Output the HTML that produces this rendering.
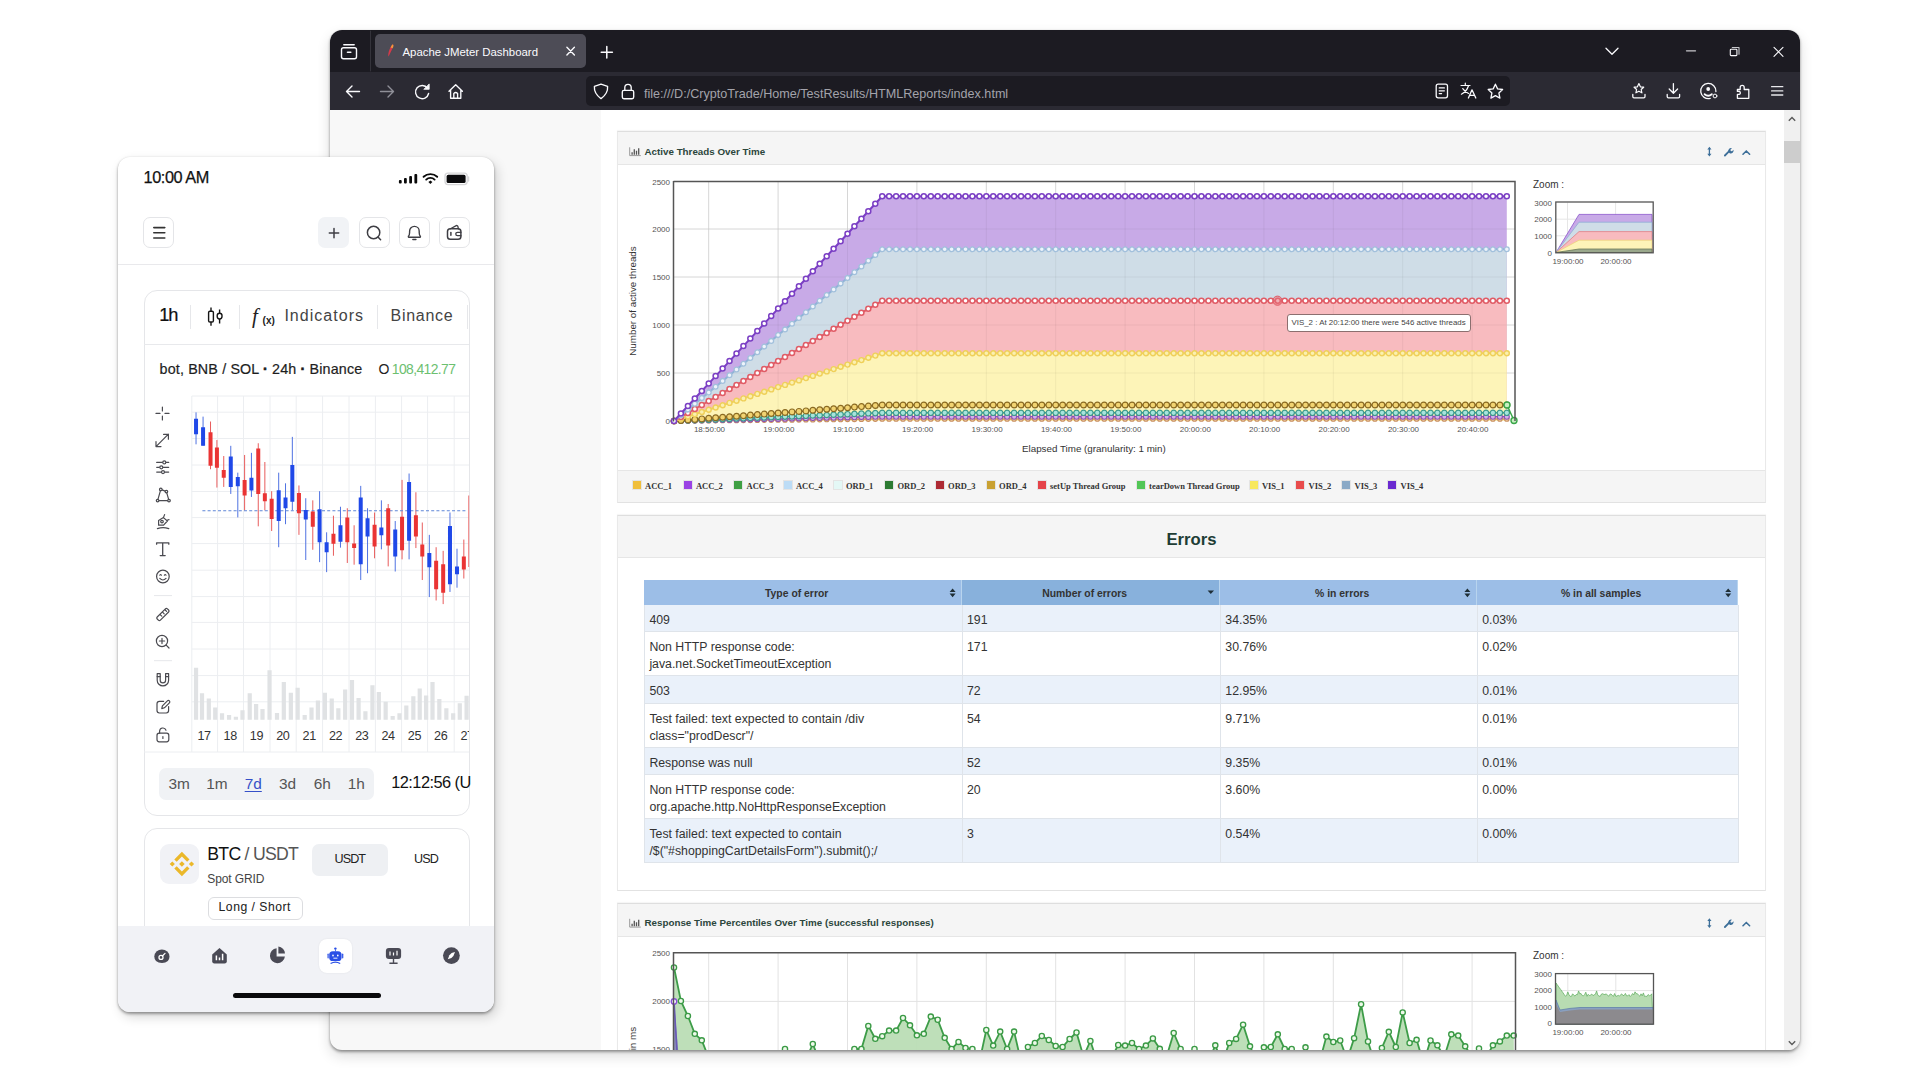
<!DOCTYPE html>
<html><head><meta charset="utf-8">
<style>
*{box-sizing:border-box;margin:0;padding:0}
html,body{width:1920px;height:1080px;overflow:hidden;background:#fff;font-family:"Liberation Sans",sans-serif}
.a{position:absolute;white-space:nowrap}
#browser{position:absolute;left:330px;top:30px;width:1470px;height:1020px;border-radius:12px;overflow:hidden;background:#f8f8f8;box-shadow:0 2px 3px rgba(0,0,0,.36),0 6px 14px rgba(0,0,0,.14),0 0 2px rgba(0,0,0,.1)}
#tabs{position:absolute;left:0;top:0;width:1470px;height:42px;background:#1c1b22}
#nav{position:absolute;left:0;top:42px;width:1470px;height:38px;background:#2b2a33}
#page{position:absolute;left:271px;top:80px;width:1183px;height:940px;background:#fff}
#sb{position:absolute;left:1454px;top:80px;width:16px;height:940px;background:#f0f0f0}
#L{position:absolute;left:0;top:0;width:1920px;height:1050px;overflow:hidden}
.card{position:absolute;background:#fff;border:1px solid #e9e9e9;border-top-color:#dedede;border-bottom-color:#e2e2e2;box-shadow:0 -1px 1px rgba(0,0,0,.035)}
.hd{position:absolute;background:#f5f5f5;border-bottom:1px solid #e6e6e6}
.ttl{position:absolute;font-size:9.8px;font-weight:700;color:#2c463c;line-height:12px}
.yl{position:absolute;font-size:8px;color:#545454;line-height:10px;text-align:right;width:30px}
.xl{position:absolute;font-size:8px;color:#545454;line-height:10px;text-align:center;width:40px}
.lg{position:absolute;font-family:"Liberation Serif",serif;font-weight:700;font-size:8.5px;color:#333;line-height:10px}
.sq{position:absolute;width:9px;height:9px}
#phone{position:absolute;left:118px;top:157px;width:376px;height:855px;border-radius:12px;background:#fff;overflow:hidden;box-shadow:0 2px 3px rgba(0,0,0,.34),3px 5px 12px rgba(0,0,0,.16),0 0 2px rgba(0,0,0,.1)}
svg{position:absolute;left:0;top:0;overflow:visible}
table{border-collapse:collapse}
</style></head><body>
<div id="browser">
  <div id="tabs"><div class="a" style="left:45px;top:4px;width:211px;height:34px;background:#4d4c56;border-radius:5px"></div></div>
  <div id="nav"><div class="a" style="left:256px;top:4px;width:924px;height:30px;background:#1c1b22;border-radius:5px"></div></div>
  <div id="page"></div>
  <div id="sb"><div class="a" style="left:0;top:31px;width:16px;height:22px;background:#cdcdcd"></div></div>
</div>
<div id="L">
<div class="card" style="left:617px;top:131px;width:1149px;height:372px"></div>
<div class="hd" style="left:618px;top:132px;width:1147px;height:33px"></div>
<div class="hd" style="left:618px;top:470px;width:1147px;height:32px;border-bottom:0;border-top:1px solid #e6e6e6"></div>
<div class="card" style="left:617px;top:515px;width:1149px;height:376px"></div>
<div class="hd" style="left:618px;top:516px;width:1147px;height:42px"></div>
<div class="card" style="left:617px;top:903px;width:1149px;height:300px"></div>
<div class="hd" style="left:618px;top:904px;width:1147px;height:33px"></div>
<svg width="1920" height="1050" viewBox="0 0 1920 1050">
<defs>
<marker id="m1" markerUnits="userSpaceOnUse" markerWidth="7.5" markerHeight="7.5" refX="3.8" refY="3.8" overflow="visible"><circle cx="3.8" cy="3.8" r="2.5" fill="#fff" stroke="#7b3fc4" stroke-width="1.5"/></marker>
<marker id="m2" markerUnits="userSpaceOnUse" markerWidth="7.1" markerHeight="7.1" refX="3.5" refY="3.5" overflow="visible"><circle cx="3.5" cy="3.5" r="2.4" fill="#eef4fb" stroke="#a2c0dc" stroke-width="1.3"/></marker>
<marker id="m3" markerUnits="userSpaceOnUse" markerWidth="7.5" markerHeight="7.5" refX="3.8" refY="3.8" overflow="visible"><circle cx="3.8" cy="3.8" r="2.5" fill="#fff" stroke="#e05c66" stroke-width="1.5"/></marker>
<marker id="m4" markerUnits="userSpaceOnUse" markerWidth="7.4" markerHeight="7.4" refX="3.7" refY="3.7" overflow="visible"><circle cx="3.7" cy="3.7" r="2.5" fill="#fbf0b0" stroke="#efd05a" stroke-width="1.4"/></marker>
<marker id="m5" markerUnits="userSpaceOnUse" markerWidth="8" markerHeight="8" refX="4" refY="4" overflow="visible"><circle cx="4" cy="4" r="2.9" fill="#f2d472" stroke="#8a6a22" stroke-width="1.2"/></marker>
<marker id="m6" markerUnits="userSpaceOnUse" markerWidth="7.6" markerHeight="7.6" refX="3.8" refY="3.8" overflow="visible"><circle cx="3.8" cy="3.8" r="2.7" fill="#a8e4dc" stroke="#3c9a8c" stroke-width="1.2"/></marker>
<marker id="m7" markerUnits="userSpaceOnUse" markerWidth="7.1" markerHeight="7.1" refX="3.5" refY="3.5" overflow="visible"><circle cx="3.5" cy="3.5" r="2.5" fill="#d4b0e8" stroke="#8c50b4" stroke-width="1.1"/></marker>
<marker id="m8" markerUnits="userSpaceOnUse" markerWidth="6.7" markerHeight="6.7" refX="3.3" refY="3.3" overflow="visible"><circle cx="3.3" cy="3.3" r="2.3" fill="#f4d0a8" stroke="#c89060" stroke-width="1.1"/></marker>
</defs>
<path d="M708.7,181V421M778.1,181V421M847.5,181V421M916.9,181V421M986.3,181V421M1055.7,181V421M1125.1,181V421M1194.5,181V421M1263.9,181V421M1333.3,181V421M1402.7,181V421M1472.1,181V421M674,373H1515M674,325H1515M674,277H1515M674,229H1515" stroke="#e2e2e2" stroke-width="1" fill="none"/>
<path d="M674,421L674,421 680.9,413.5 687.9,406 694.8,398.5 701.8,391 708.7,383.6 715.6,376.1 722.6,368.6 729.5,361.1 736.5,353.6 743.4,346.1 750.3,338.6 757.3,331.1 764.2,323.6 771.2,316.1 778.1,308.6 785,301.2 792,293.7 798.9,286.2 805.9,278.7 812.8,271.2 819.7,263.7 826.7,256.2 833.6,248.7 840.6,241.2 847.5,233.8 854.4,226.3 861.4,218.8 868.3,211.3 875.3,203.8 882.2,196.3 889.1,196.3 896.1,196.3 903,196.3 910,196.3 916.9,196.3 923.8,196.3 930.8,196.3 937.7,196.3 944.7,196.3 951.6,196.3 958.5,196.3 965.5,196.3 972.4,196.3 979.4,196.3 986.3,196.3 993.2,196.3 1000.2,196.3 1007.1,196.3 1014.1,196.3 1021,196.3 1027.9,196.3 1034.9,196.3 1041.8,196.3 1048.8,196.3 1055.7,196.3 1062.6,196.3 1069.6,196.3 1076.5,196.3 1083.5,196.3 1090.4,196.3 1097.3,196.3 1104.3,196.3 1111.2,196.3 1118.2,196.3 1125.1,196.3 1132,196.3 1139,196.3 1145.9,196.3 1152.9,196.3 1159.8,196.3 1166.7,196.3 1173.7,196.3 1180.6,196.3 1187.6,196.3 1194.5,196.3 1201.4,196.3 1208.4,196.3 1215.3,196.3 1222.3,196.3 1229.2,196.3 1236.1,196.3 1243.1,196.3 1250,196.3 1257,196.3 1263.9,196.3 1270.8,196.3 1277.8,196.3 1284.7,196.3 1291.7,196.3 1298.6,196.3 1305.5,196.3 1312.5,196.3 1319.4,196.3 1326.4,196.3 1333.3,196.3 1340.2,196.3 1347.2,196.3 1354.1,196.3 1361.1,196.3 1368,196.3 1374.9,196.3 1381.9,196.3 1388.8,196.3 1395.8,196.3 1402.7,196.3 1409.6,196.3 1416.6,196.3 1423.5,196.3 1430.5,196.3 1437.4,196.3 1444.3,196.3 1451.3,196.3 1458.2,196.3 1465.2,196.3 1472.1,196.3 1479,196.3 1486,196.3 1492.9,196.3 1499.9,196.3 1506.8,196.3 L1506.8,421Z" fill="#c8aae7"/>
<path d="M674,421L674,421 680.9,415.3 687.9,409.6 694.8,403.8 701.8,398.1 708.7,392.4 715.6,386.7 722.6,380.9 729.5,375.2 736.5,369.5 743.4,363.8 750.3,358 757.3,352.3 764.2,346.6 771.2,340.9 778.1,335.1 785,329.4 792,323.7 798.9,318 805.9,312.3 812.8,306.5 819.7,300.8 826.7,295.1 833.6,289.4 840.6,283.6 847.5,277.9 854.4,272.2 861.4,266.5 868.3,260.7 875.3,255 882.2,249.3 889.1,249.3 896.1,249.3 903,249.3 910,249.3 916.9,249.3 923.8,249.3 930.8,249.3 937.7,249.3 944.7,249.3 951.6,249.3 958.5,249.3 965.5,249.3 972.4,249.3 979.4,249.3 986.3,249.3 993.2,249.3 1000.2,249.3 1007.1,249.3 1014.1,249.3 1021,249.3 1027.9,249.3 1034.9,249.3 1041.8,249.3 1048.8,249.3 1055.7,249.3 1062.6,249.3 1069.6,249.3 1076.5,249.3 1083.5,249.3 1090.4,249.3 1097.3,249.3 1104.3,249.3 1111.2,249.3 1118.2,249.3 1125.1,249.3 1132,249.3 1139,249.3 1145.9,249.3 1152.9,249.3 1159.8,249.3 1166.7,249.3 1173.7,249.3 1180.6,249.3 1187.6,249.3 1194.5,249.3 1201.4,249.3 1208.4,249.3 1215.3,249.3 1222.3,249.3 1229.2,249.3 1236.1,249.3 1243.1,249.3 1250,249.3 1257,249.3 1263.9,249.3 1270.8,249.3 1277.8,249.3 1284.7,249.3 1291.7,249.3 1298.6,249.3 1305.5,249.3 1312.5,249.3 1319.4,249.3 1326.4,249.3 1333.3,249.3 1340.2,249.3 1347.2,249.3 1354.1,249.3 1361.1,249.3 1368,249.3 1374.9,249.3 1381.9,249.3 1388.8,249.3 1395.8,249.3 1402.7,249.3 1409.6,249.3 1416.6,249.3 1423.5,249.3 1430.5,249.3 1437.4,249.3 1444.3,249.3 1451.3,249.3 1458.2,249.3 1465.2,249.3 1472.1,249.3 1479,249.3 1486,249.3 1492.9,249.3 1499.9,249.3 1506.8,249.3 L1506.8,421Z" fill="#cfdde7"/>
<path d="M674,421L674,421 680.9,417 687.9,413 694.8,409 701.8,405 708.7,401 715.6,397 722.6,393 729.5,388.9 736.5,384.9 743.4,380.9 750.3,376.9 757.3,372.9 764.2,368.9 771.2,364.9 778.1,360.9 785,356.9 792,352.9 798.9,348.9 805.9,344.9 812.8,340.9 819.7,336.9 826.7,332.9 833.6,328.8 840.6,324.8 847.5,320.8 854.4,316.8 861.4,312.8 868.3,308.8 875.3,304.8 882.2,300.8 889.1,300.8 896.1,300.8 903,300.8 910,300.8 916.9,300.8 923.8,300.8 930.8,300.8 937.7,300.8 944.7,300.8 951.6,300.8 958.5,300.8 965.5,300.8 972.4,300.8 979.4,300.8 986.3,300.8 993.2,300.8 1000.2,300.8 1007.1,300.8 1014.1,300.8 1021,300.8 1027.9,300.8 1034.9,300.8 1041.8,300.8 1048.8,300.8 1055.7,300.8 1062.6,300.8 1069.6,300.8 1076.5,300.8 1083.5,300.8 1090.4,300.8 1097.3,300.8 1104.3,300.8 1111.2,300.8 1118.2,300.8 1125.1,300.8 1132,300.8 1139,300.8 1145.9,300.8 1152.9,300.8 1159.8,300.8 1166.7,300.8 1173.7,300.8 1180.6,300.8 1187.6,300.8 1194.5,300.8 1201.4,300.8 1208.4,300.8 1215.3,300.8 1222.3,300.8 1229.2,300.8 1236.1,300.8 1243.1,300.8 1250,300.8 1257,300.8 1263.9,300.8 1270.8,300.8 1277.8,300.8 1284.7,300.8 1291.7,300.8 1298.6,300.8 1305.5,300.8 1312.5,300.8 1319.4,300.8 1326.4,300.8 1333.3,300.8 1340.2,300.8 1347.2,300.8 1354.1,300.8 1361.1,300.8 1368,300.8 1374.9,300.8 1381.9,300.8 1388.8,300.8 1395.8,300.8 1402.7,300.8 1409.6,300.8 1416.6,300.8 1423.5,300.8 1430.5,300.8 1437.4,300.8 1444.3,300.8 1451.3,300.8 1458.2,300.8 1465.2,300.8 1472.1,300.8 1479,300.8 1486,300.8 1492.9,300.8 1499.9,300.8 1506.8,300.8 L1506.8,421Z" fill="#f8bbbf"/>
<path d="M674,421L674,421 680.9,418.7 687.9,416.5 694.8,414.2 701.8,412 708.7,409.7 715.6,407.5 722.6,405.2 729.5,402.9 736.5,400.7 743.4,398.4 750.3,396.2 757.3,393.9 764.2,391.7 771.2,389.4 778.1,387.1 785,384.9 792,382.6 798.9,380.4 805.9,378.1 812.8,375.9 819.7,373.6 826.7,371.4 833.6,369.1 840.6,366.8 847.5,364.6 854.4,362.3 861.4,360.1 868.3,357.8 875.3,355.6 882.2,353.3 889.1,353.3 896.1,353.3 903,353.3 910,353.3 916.9,353.3 923.8,353.3 930.8,353.3 937.7,353.3 944.7,353.3 951.6,353.3 958.5,353.3 965.5,353.3 972.4,353.3 979.4,353.3 986.3,353.3 993.2,353.3 1000.2,353.3 1007.1,353.3 1014.1,353.3 1021,353.3 1027.9,353.3 1034.9,353.3 1041.8,353.3 1048.8,353.3 1055.7,353.3 1062.6,353.3 1069.6,353.3 1076.5,353.3 1083.5,353.3 1090.4,353.3 1097.3,353.3 1104.3,353.3 1111.2,353.3 1118.2,353.3 1125.1,353.3 1132,353.3 1139,353.3 1145.9,353.3 1152.9,353.3 1159.8,353.3 1166.7,353.3 1173.7,353.3 1180.6,353.3 1187.6,353.3 1194.5,353.3 1201.4,353.3 1208.4,353.3 1215.3,353.3 1222.3,353.3 1229.2,353.3 1236.1,353.3 1243.1,353.3 1250,353.3 1257,353.3 1263.9,353.3 1270.8,353.3 1277.8,353.3 1284.7,353.3 1291.7,353.3 1298.6,353.3 1305.5,353.3 1312.5,353.3 1319.4,353.3 1326.4,353.3 1333.3,353.3 1340.2,353.3 1347.2,353.3 1354.1,353.3 1361.1,353.3 1368,353.3 1374.9,353.3 1381.9,353.3 1388.8,353.3 1395.8,353.3 1402.7,353.3 1409.6,353.3 1416.6,353.3 1423.5,353.3 1430.5,353.3 1437.4,353.3 1444.3,353.3 1451.3,353.3 1458.2,353.3 1465.2,353.3 1472.1,353.3 1479,353.3 1486,353.3 1492.9,353.3 1499.9,353.3 1506.8,353.3 L1506.8,421Z" fill="#fdf4b8"/>
<path d="M708.7,181V421M778.1,181V421M847.5,181V421M916.9,181V421M986.3,181V421M1055.7,181V421M1125.1,181V421M1194.5,181V421M1263.9,181V421M1333.3,181V421M1402.7,181V421M1472.1,181V421M674,373H1515M674,325H1515M674,277H1515M674,229H1515" stroke="#000" stroke-opacity="0.05" stroke-width="1" fill="none"/>
<polyline points="674,421 680.9,420.9 687.9,420.9 694.8,420.8 701.8,420.7 708.7,420.7 715.6,420.6 722.6,420.5 729.5,420.5 736.5,420.4 743.4,420.3 750.3,420.3 757.3,420.2 764.2,420.1 771.2,420.1 778.1,420 785,419.9 792,419.9 798.9,419.8 805.9,419.7 812.8,419.7 819.7,419.6 826.7,419.5 833.6,419.5 840.6,419.4 847.5,419.3 854.4,419.3 861.4,419.2 868.3,419.1 875.3,419.1 882.2,419 889.1,419 896.1,419 903,419 910,419 916.9,419 923.8,419 930.8,419 937.7,419 944.7,419 951.6,419 958.5,419 965.5,419 972.4,419 979.4,419 986.3,419 993.2,419 1000.2,419 1007.1,419 1014.1,419 1021,419 1027.9,419 1034.9,419 1041.8,419 1048.8,419 1055.7,419 1062.6,419 1069.6,419 1076.5,419 1083.5,419 1090.4,419 1097.3,419 1104.3,419 1111.2,419 1118.2,419 1125.1,419 1132,419 1139,419 1145.9,419 1152.9,419 1159.8,419 1166.7,419 1173.7,419 1180.6,419 1187.6,419 1194.5,419 1201.4,419 1208.4,419 1215.3,419 1222.3,419 1229.2,419 1236.1,419 1243.1,419 1250,419 1257,419 1263.9,419 1270.8,419 1277.8,419 1284.7,419 1291.7,419 1298.6,419 1305.5,419 1312.5,419 1319.4,419 1326.4,419 1333.3,419 1340.2,419 1347.2,419 1354.1,419 1361.1,419 1368,419 1374.9,419 1381.9,419 1388.8,419 1395.8,419 1402.7,419 1409.6,419 1416.6,419 1423.5,419 1430.5,419 1437.4,419 1444.3,419 1451.3,419 1458.2,419 1465.2,419 1472.1,419 1479,419 1486,419 1492.9,419 1499.9,419 1506.8,419" fill="none" stroke="#c89060" stroke-width="1.5" marker-start="url(#m8)" marker-mid="url(#m8)" marker-end="url(#m8)"/>
<polyline points="674,421 680.9,420.9 687.9,420.7 694.8,420.6 701.8,420.4 708.7,420.3 715.6,420.1 722.6,420 729.5,419.9 736.5,419.7 743.4,419.6 750.3,419.4 757.3,419.3 764.2,419.1 771.2,419 778.1,418.9 785,418.7 792,418.6 798.9,418.4 805.9,418.3 812.8,418.1 819.7,418 826.7,417.8 833.6,417.7 840.6,417.6 847.5,417.4 854.4,417.3 861.4,417.1 868.3,417 875.3,416.8 882.2,416.7 889.1,416.7 896.1,416.7 903,416.7 910,416.7 916.9,416.7 923.8,416.7 930.8,416.7 937.7,416.7 944.7,416.7 951.6,416.7 958.5,416.7 965.5,416.7 972.4,416.7 979.4,416.7 986.3,416.7 993.2,416.7 1000.2,416.7 1007.1,416.7 1014.1,416.7 1021,416.7 1027.9,416.7 1034.9,416.7 1041.8,416.7 1048.8,416.7 1055.7,416.7 1062.6,416.7 1069.6,416.7 1076.5,416.7 1083.5,416.7 1090.4,416.7 1097.3,416.7 1104.3,416.7 1111.2,416.7 1118.2,416.7 1125.1,416.7 1132,416.7 1139,416.7 1145.9,416.7 1152.9,416.7 1159.8,416.7 1166.7,416.7 1173.7,416.7 1180.6,416.7 1187.6,416.7 1194.5,416.7 1201.4,416.7 1208.4,416.7 1215.3,416.7 1222.3,416.7 1229.2,416.7 1236.1,416.7 1243.1,416.7 1250,416.7 1257,416.7 1263.9,416.7 1270.8,416.7 1277.8,416.7 1284.7,416.7 1291.7,416.7 1298.6,416.7 1305.5,416.7 1312.5,416.7 1319.4,416.7 1326.4,416.7 1333.3,416.7 1340.2,416.7 1347.2,416.7 1354.1,416.7 1361.1,416.7 1368,416.7 1374.9,416.7 1381.9,416.7 1388.8,416.7 1395.8,416.7 1402.7,416.7 1409.6,416.7 1416.6,416.7 1423.5,416.7 1430.5,416.7 1437.4,416.7 1444.3,416.7 1451.3,416.7 1458.2,416.7 1465.2,416.7 1472.1,416.7 1479,416.7 1486,416.7 1492.9,416.7 1499.9,416.7 1506.8,416.7" fill="none" stroke="#8c50b4" stroke-width="1.5" marker-start="url(#m7)" marker-mid="url(#m7)" marker-end="url(#m7)"/>
<polyline points="674,421 680.9,420.7 687.9,420.5 694.8,420.2 701.8,419.9 708.7,419.6 715.6,419.4 722.6,419.1 729.5,418.8 736.5,418.5 743.4,418.3 750.3,418 757.3,417.7 764.2,417.4 771.2,417.2 778.1,416.9 785,416.6 792,416.4 798.9,416.1 805.9,415.8 812.8,415.5 819.7,415.3 826.7,415 833.6,414.7 840.6,414.4 847.5,414.2 854.4,413.9 861.4,413.6 868.3,413.3 875.3,413.1 882.2,412.8 889.1,412.8 896.1,412.8 903,412.8 910,412.8 916.9,412.8 923.8,412.8 930.8,412.8 937.7,412.8 944.7,412.8 951.6,412.8 958.5,412.8 965.5,412.8 972.4,412.8 979.4,412.8 986.3,412.8 993.2,412.8 1000.2,412.8 1007.1,412.8 1014.1,412.8 1021,412.8 1027.9,412.8 1034.9,412.8 1041.8,412.8 1048.8,412.8 1055.7,412.8 1062.6,412.8 1069.6,412.8 1076.5,412.8 1083.5,412.8 1090.4,412.8 1097.3,412.8 1104.3,412.8 1111.2,412.8 1118.2,412.8 1125.1,412.8 1132,412.8 1139,412.8 1145.9,412.8 1152.9,412.8 1159.8,412.8 1166.7,412.8 1173.7,412.8 1180.6,412.8 1187.6,412.8 1194.5,412.8 1201.4,412.8 1208.4,412.8 1215.3,412.8 1222.3,412.8 1229.2,412.8 1236.1,412.8 1243.1,412.8 1250,412.8 1257,412.8 1263.9,412.8 1270.8,412.8 1277.8,412.8 1284.7,412.8 1291.7,412.8 1298.6,412.8 1305.5,412.8 1312.5,412.8 1319.4,412.8 1326.4,412.8 1333.3,412.8 1340.2,412.8 1347.2,412.8 1354.1,412.8 1361.1,412.8 1368,412.8 1374.9,412.8 1381.9,412.8 1388.8,412.8 1395.8,412.8 1402.7,412.8 1409.6,412.8 1416.6,412.8 1423.5,412.8 1430.5,412.8 1437.4,412.8 1444.3,412.8 1451.3,412.8 1458.2,412.8 1465.2,412.8 1472.1,412.8 1479,412.8 1486,412.8 1492.9,412.8 1499.9,412.8 1506.8,412.8" fill="none" stroke="#3c9a8c" stroke-width="1.5" marker-start="url(#m6)" marker-mid="url(#m6)" marker-end="url(#m6)"/>
<polyline points="674,421 680.9,420.5 687.9,419.9 694.8,419.4 701.8,418.9 708.7,418.3 715.6,417.8 722.6,417.3 729.5,416.7 736.5,416.2 743.4,415.7 750.3,415.1 757.3,414.6 764.2,414.1 771.2,413.5 778.1,413 785,412.5 792,411.9 798.9,411.4 805.9,410.9 812.8,410.3 819.7,409.8 826.7,409.3 833.6,408.7 840.6,408.2 847.5,407.7 854.4,407.1 861.4,406.6 868.3,406.1 875.3,405.5 882.2,405 889.1,405 896.1,405 903,405 910,405 916.9,405 923.8,405 930.8,405 937.7,405 944.7,405 951.6,405 958.5,405 965.5,405 972.4,405 979.4,405 986.3,405 993.2,405 1000.2,405 1007.1,405 1014.1,405 1021,405 1027.9,405 1034.9,405 1041.8,405 1048.8,405 1055.7,405 1062.6,405 1069.6,405 1076.5,405 1083.5,405 1090.4,405 1097.3,405 1104.3,405 1111.2,405 1118.2,405 1125.1,405 1132,405 1139,405 1145.9,405 1152.9,405 1159.8,405 1166.7,405 1173.7,405 1180.6,405 1187.6,405 1194.5,405 1201.4,405 1208.4,405 1215.3,405 1222.3,405 1229.2,405 1236.1,405 1243.1,405 1250,405 1257,405 1263.9,405 1270.8,405 1277.8,405 1284.7,405 1291.7,405 1298.6,405 1305.5,405 1312.5,405 1319.4,405 1326.4,405 1333.3,405 1340.2,405 1347.2,405 1354.1,405 1361.1,405 1368,405 1374.9,405 1381.9,405 1388.8,405 1395.8,405 1402.7,405 1409.6,405 1416.6,405 1423.5,405 1430.5,405 1437.4,405 1444.3,405 1451.3,405 1458.2,405 1465.2,405 1472.1,405 1479,405 1486,405 1492.9,405 1499.9,405 1506.8,405" fill="none" stroke="#7a5a18" stroke-width="1.5" marker-start="url(#m5)" marker-mid="url(#m5)" marker-end="url(#m5)"/>
<polyline points="674,421 680.9,418.7 687.9,416.5 694.8,414.2 701.8,412 708.7,409.7 715.6,407.5 722.6,405.2 729.5,402.9 736.5,400.7 743.4,398.4 750.3,396.2 757.3,393.9 764.2,391.7 771.2,389.4 778.1,387.1 785,384.9 792,382.6 798.9,380.4 805.9,378.1 812.8,375.9 819.7,373.6 826.7,371.4 833.6,369.1 840.6,366.8 847.5,364.6 854.4,362.3 861.4,360.1 868.3,357.8 875.3,355.6 882.2,353.3 889.1,353.3 896.1,353.3 903,353.3 910,353.3 916.9,353.3 923.8,353.3 930.8,353.3 937.7,353.3 944.7,353.3 951.6,353.3 958.5,353.3 965.5,353.3 972.4,353.3 979.4,353.3 986.3,353.3 993.2,353.3 1000.2,353.3 1007.1,353.3 1014.1,353.3 1021,353.3 1027.9,353.3 1034.9,353.3 1041.8,353.3 1048.8,353.3 1055.7,353.3 1062.6,353.3 1069.6,353.3 1076.5,353.3 1083.5,353.3 1090.4,353.3 1097.3,353.3 1104.3,353.3 1111.2,353.3 1118.2,353.3 1125.1,353.3 1132,353.3 1139,353.3 1145.9,353.3 1152.9,353.3 1159.8,353.3 1166.7,353.3 1173.7,353.3 1180.6,353.3 1187.6,353.3 1194.5,353.3 1201.4,353.3 1208.4,353.3 1215.3,353.3 1222.3,353.3 1229.2,353.3 1236.1,353.3 1243.1,353.3 1250,353.3 1257,353.3 1263.9,353.3 1270.8,353.3 1277.8,353.3 1284.7,353.3 1291.7,353.3 1298.6,353.3 1305.5,353.3 1312.5,353.3 1319.4,353.3 1326.4,353.3 1333.3,353.3 1340.2,353.3 1347.2,353.3 1354.1,353.3 1361.1,353.3 1368,353.3 1374.9,353.3 1381.9,353.3 1388.8,353.3 1395.8,353.3 1402.7,353.3 1409.6,353.3 1416.6,353.3 1423.5,353.3 1430.5,353.3 1437.4,353.3 1444.3,353.3 1451.3,353.3 1458.2,353.3 1465.2,353.3 1472.1,353.3 1479,353.3 1486,353.3 1492.9,353.3 1499.9,353.3 1506.8,353.3" fill="none" stroke="#efd15c" stroke-width="2" marker-start="url(#m4)" marker-mid="url(#m4)" marker-end="url(#m4)"/>
<polyline points="674,421 680.9,417 687.9,413 694.8,409 701.8,405 708.7,401 715.6,397 722.6,393 729.5,388.9 736.5,384.9 743.4,380.9 750.3,376.9 757.3,372.9 764.2,368.9 771.2,364.9 778.1,360.9 785,356.9 792,352.9 798.9,348.9 805.9,344.9 812.8,340.9 819.7,336.9 826.7,332.9 833.6,328.8 840.6,324.8 847.5,320.8 854.4,316.8 861.4,312.8 868.3,308.8 875.3,304.8 882.2,300.8 889.1,300.8 896.1,300.8 903,300.8 910,300.8 916.9,300.8 923.8,300.8 930.8,300.8 937.7,300.8 944.7,300.8 951.6,300.8 958.5,300.8 965.5,300.8 972.4,300.8 979.4,300.8 986.3,300.8 993.2,300.8 1000.2,300.8 1007.1,300.8 1014.1,300.8 1021,300.8 1027.9,300.8 1034.9,300.8 1041.8,300.8 1048.8,300.8 1055.7,300.8 1062.6,300.8 1069.6,300.8 1076.5,300.8 1083.5,300.8 1090.4,300.8 1097.3,300.8 1104.3,300.8 1111.2,300.8 1118.2,300.8 1125.1,300.8 1132,300.8 1139,300.8 1145.9,300.8 1152.9,300.8 1159.8,300.8 1166.7,300.8 1173.7,300.8 1180.6,300.8 1187.6,300.8 1194.5,300.8 1201.4,300.8 1208.4,300.8 1215.3,300.8 1222.3,300.8 1229.2,300.8 1236.1,300.8 1243.1,300.8 1250,300.8 1257,300.8 1263.9,300.8 1270.8,300.8 1277.8,300.8 1284.7,300.8 1291.7,300.8 1298.6,300.8 1305.5,300.8 1312.5,300.8 1319.4,300.8 1326.4,300.8 1333.3,300.8 1340.2,300.8 1347.2,300.8 1354.1,300.8 1361.1,300.8 1368,300.8 1374.9,300.8 1381.9,300.8 1388.8,300.8 1395.8,300.8 1402.7,300.8 1409.6,300.8 1416.6,300.8 1423.5,300.8 1430.5,300.8 1437.4,300.8 1444.3,300.8 1451.3,300.8 1458.2,300.8 1465.2,300.8 1472.1,300.8 1479,300.8 1486,300.8 1492.9,300.8 1499.9,300.8 1506.8,300.8" fill="none" stroke="#e05c66" stroke-width="2" marker-start="url(#m3)" marker-mid="url(#m3)" marker-end="url(#m3)"/>
<polyline points="674,421 680.9,415.3 687.9,409.6 694.8,403.8 701.8,398.1 708.7,392.4 715.6,386.7 722.6,380.9 729.5,375.2 736.5,369.5 743.4,363.8 750.3,358 757.3,352.3 764.2,346.6 771.2,340.9 778.1,335.1 785,329.4 792,323.7 798.9,318 805.9,312.3 812.8,306.5 819.7,300.8 826.7,295.1 833.6,289.4 840.6,283.6 847.5,277.9 854.4,272.2 861.4,266.5 868.3,260.7 875.3,255 882.2,249.3 889.1,249.3 896.1,249.3 903,249.3 910,249.3 916.9,249.3 923.8,249.3 930.8,249.3 937.7,249.3 944.7,249.3 951.6,249.3 958.5,249.3 965.5,249.3 972.4,249.3 979.4,249.3 986.3,249.3 993.2,249.3 1000.2,249.3 1007.1,249.3 1014.1,249.3 1021,249.3 1027.9,249.3 1034.9,249.3 1041.8,249.3 1048.8,249.3 1055.7,249.3 1062.6,249.3 1069.6,249.3 1076.5,249.3 1083.5,249.3 1090.4,249.3 1097.3,249.3 1104.3,249.3 1111.2,249.3 1118.2,249.3 1125.1,249.3 1132,249.3 1139,249.3 1145.9,249.3 1152.9,249.3 1159.8,249.3 1166.7,249.3 1173.7,249.3 1180.6,249.3 1187.6,249.3 1194.5,249.3 1201.4,249.3 1208.4,249.3 1215.3,249.3 1222.3,249.3 1229.2,249.3 1236.1,249.3 1243.1,249.3 1250,249.3 1257,249.3 1263.9,249.3 1270.8,249.3 1277.8,249.3 1284.7,249.3 1291.7,249.3 1298.6,249.3 1305.5,249.3 1312.5,249.3 1319.4,249.3 1326.4,249.3 1333.3,249.3 1340.2,249.3 1347.2,249.3 1354.1,249.3 1361.1,249.3 1368,249.3 1374.9,249.3 1381.9,249.3 1388.8,249.3 1395.8,249.3 1402.7,249.3 1409.6,249.3 1416.6,249.3 1423.5,249.3 1430.5,249.3 1437.4,249.3 1444.3,249.3 1451.3,249.3 1458.2,249.3 1465.2,249.3 1472.1,249.3 1479,249.3 1486,249.3 1492.9,249.3 1499.9,249.3 1506.8,249.3" fill="none" stroke="#91b3d8" stroke-width="2" marker-start="url(#m2)" marker-mid="url(#m2)" marker-end="url(#m2)"/>
<polyline points="674,421 680.9,413.5 687.9,406 694.8,398.5 701.8,391 708.7,383.6 715.6,376.1 722.6,368.6 729.5,361.1 736.5,353.6 743.4,346.1 750.3,338.6 757.3,331.1 764.2,323.6 771.2,316.1 778.1,308.6 785,301.2 792,293.7 798.9,286.2 805.9,278.7 812.8,271.2 819.7,263.7 826.7,256.2 833.6,248.7 840.6,241.2 847.5,233.8 854.4,226.3 861.4,218.8 868.3,211.3 875.3,203.8 882.2,196.3 889.1,196.3 896.1,196.3 903,196.3 910,196.3 916.9,196.3 923.8,196.3 930.8,196.3 937.7,196.3 944.7,196.3 951.6,196.3 958.5,196.3 965.5,196.3 972.4,196.3 979.4,196.3 986.3,196.3 993.2,196.3 1000.2,196.3 1007.1,196.3 1014.1,196.3 1021,196.3 1027.9,196.3 1034.9,196.3 1041.8,196.3 1048.8,196.3 1055.7,196.3 1062.6,196.3 1069.6,196.3 1076.5,196.3 1083.5,196.3 1090.4,196.3 1097.3,196.3 1104.3,196.3 1111.2,196.3 1118.2,196.3 1125.1,196.3 1132,196.3 1139,196.3 1145.9,196.3 1152.9,196.3 1159.8,196.3 1166.7,196.3 1173.7,196.3 1180.6,196.3 1187.6,196.3 1194.5,196.3 1201.4,196.3 1208.4,196.3 1215.3,196.3 1222.3,196.3 1229.2,196.3 1236.1,196.3 1243.1,196.3 1250,196.3 1257,196.3 1263.9,196.3 1270.8,196.3 1277.8,196.3 1284.7,196.3 1291.7,196.3 1298.6,196.3 1305.5,196.3 1312.5,196.3 1319.4,196.3 1326.4,196.3 1333.3,196.3 1340.2,196.3 1347.2,196.3 1354.1,196.3 1361.1,196.3 1368,196.3 1374.9,196.3 1381.9,196.3 1388.8,196.3 1395.8,196.3 1402.7,196.3 1409.6,196.3 1416.6,196.3 1423.5,196.3 1430.5,196.3 1437.4,196.3 1444.3,196.3 1451.3,196.3 1458.2,196.3 1465.2,196.3 1472.1,196.3 1479,196.3 1486,196.3 1492.9,196.3 1499.9,196.3 1506.8,196.3" fill="none" stroke="#7b3fc4" stroke-width="2" marker-start="url(#m1)" marker-mid="url(#m1)" marker-end="url(#m1)"/>
<circle cx="1277.5" cy="300.7" r="4.6" fill="#e8707a" fill-opacity="0.55" stroke="#e05c66" stroke-width="1"/>
<path d="M1507,405L1514,420.5" stroke="#3aa64a" stroke-width="1.5"/><circle cx="1507" cy="405" r="3" fill="#c8f0c0" stroke="#3aa64a" stroke-width="1.4"/><circle cx="1514" cy="420.5" r="3" fill="#c8f0c0" stroke="#3aa64a" stroke-width="1.4"/>
<path d="M673.5,181.5H1515V421" fill="none" stroke="#555" stroke-width="1.5"/><path d="M673.5,181V421.5" stroke="#555" stroke-width="1.5"/>
<path d="M708.7,953V1060M778.1,953V1060M847.5,953V1060M916.9,953V1060M986.3,953V1060M1055.7,953V1060M1125.1,953V1060M1194.5,953V1060M1263.9,953V1060M1333.3,953V1060M1402.7,953V1060M1472.1,953V1060M674,1001.4H1515" stroke="#e2e2e2" stroke-width="1" fill="none"/>
<path d="M674,1060L674,967.5 680.9,1001 687.9,1016 694.8,1033.8 701.8,1040.3 708.7,1057.9 715.6,1060.4 722.6,1059 729.5,1060.8 736.5,1061 743.4,1056.5 750.3,1056.1 757.3,1062.7 764.2,1058.1 771.2,1057.9 778.1,1064 785,1049 792,1059.8 798.9,1062.7 805.9,1059.8 812.8,1044 819.7,1061.1 826.7,1057.2 833.6,1061.1 840.6,1062.9 847.5,1060.2 854.4,1049 861.4,1049 868.3,1025.9 875.3,1038.8 882.2,1036.2 889.1,1030.6 896.1,1030.6 903,1018 910,1025.3 916.9,1035.3 923.8,1033.8 930.8,1016.6 937.7,1019.7 944.7,1037.8 951.6,1049 958.5,1041.9 965.5,1048 972.4,1049 979.4,1061.9 986.3,1030 993.2,1045.6 1000.2,1031.6 1007.1,1049 1014.1,1031.6 1021,1061.4 1027.9,1047 1034.9,1043 1041.8,1036 1048.8,1040 1055.7,1046 1062.6,1047 1069.6,1039 1076.5,1032.5 1083.5,1056.5 1090.4,1041 1097.3,1062.1 1104.3,1060.7 1111.2,1058.4 1118.2,1045 1125.1,1045.6 1132,1043 1139,1049 1145.9,1045.6 1152.9,1038.4 1159.8,1048.8 1166.7,1056.2 1173.7,1033 1180.6,1049 1187.6,1062.9 1194.5,1049 1201.4,1059.8 1208.4,1061.8 1215.3,1045.3 1222.3,1063 1229.2,1043 1236.1,1038.9 1243.1,1024.7 1250,1046.3 1257,1061.7 1263.9,1047.3 1270.8,1047 1277.8,1034.3 1284.7,1049 1291.7,1049 1298.6,1063.4 1305.5,1047.3 1312.5,1059.2 1319.4,1062.4 1326.4,1036.6 1333.3,1042 1340.2,1040.5 1347.2,1059.6 1354.1,1038.2 1361.1,1004.3 1368,1041.5 1374.9,1063.5 1381.9,1047.9 1388.8,1031.8 1395.8,1047 1402.7,1012.4 1409.6,1043 1416.6,1039.8 1423.5,1063 1430.5,1040.5 1437.4,1045.3 1444.3,1056.8 1451.3,1034.3 1458.2,1035.6 1465.2,1046.3 1472.1,1057.1 1479,1048.5 1486,1057.7 1492.9,1045.3 1499.9,1041.4 1506.8,1035.6 1513.7,1035.6 L1514,1060Z" fill="#b9dcb3" fill-opacity="0.92"/>
<path d="M674,1001.5L679,1060H673.5Z" fill="#8c90b8"/><path d="M674,1001.5L677.5,1060" stroke="#6a5ab8" stroke-width="1.6"/>
<defs><marker id="mg" markerUnits="userSpaceOnUse" markerWidth="8" markerHeight="8" refX="4" refY="4" overflow="visible"><circle cx="4" cy="4" r="2.6" fill="#eef9ea" stroke="#3a9a45" stroke-width="1.35"/></marker></defs>
<polyline points="674,967.5 680.9,1001 687.9,1016 694.8,1033.8 701.8,1040.3 708.7,1057.9 715.6,1060.4 722.6,1059 729.5,1060.8 736.5,1061 743.4,1056.5 750.3,1056.1 757.3,1062.7 764.2,1058.1 771.2,1057.9 778.1,1064 785,1049 792,1059.8 798.9,1062.7 805.9,1059.8 812.8,1044 819.7,1061.1 826.7,1057.2 833.6,1061.1 840.6,1062.9 847.5,1060.2 854.4,1049 861.4,1049 868.3,1025.9 875.3,1038.8 882.2,1036.2 889.1,1030.6 896.1,1030.6 903,1018 910,1025.3 916.9,1035.3 923.8,1033.8 930.8,1016.6 937.7,1019.7 944.7,1037.8 951.6,1049 958.5,1041.9 965.5,1048 972.4,1049 979.4,1061.9 986.3,1030 993.2,1045.6 1000.2,1031.6 1007.1,1049 1014.1,1031.6 1021,1061.4 1027.9,1047 1034.9,1043 1041.8,1036 1048.8,1040 1055.7,1046 1062.6,1047 1069.6,1039 1076.5,1032.5 1083.5,1056.5 1090.4,1041 1097.3,1062.1 1104.3,1060.7 1111.2,1058.4 1118.2,1045 1125.1,1045.6 1132,1043 1139,1049 1145.9,1045.6 1152.9,1038.4 1159.8,1048.8 1166.7,1056.2 1173.7,1033 1180.6,1049 1187.6,1062.9 1194.5,1049 1201.4,1059.8 1208.4,1061.8 1215.3,1045.3 1222.3,1063 1229.2,1043 1236.1,1038.9 1243.1,1024.7 1250,1046.3 1257,1061.7 1263.9,1047.3 1270.8,1047 1277.8,1034.3 1284.7,1049 1291.7,1049 1298.6,1063.4 1305.5,1047.3 1312.5,1059.2 1319.4,1062.4 1326.4,1036.6 1333.3,1042 1340.2,1040.5 1347.2,1059.6 1354.1,1038.2 1361.1,1004.3 1368,1041.5 1374.9,1063.5 1381.9,1047.9 1388.8,1031.8 1395.8,1047 1402.7,1012.4 1409.6,1043 1416.6,1039.8 1423.5,1063 1430.5,1040.5 1437.4,1045.3 1444.3,1056.8 1451.3,1034.3 1458.2,1035.6 1465.2,1046.3 1472.1,1057.1 1479,1048.5 1486,1057.7 1492.9,1045.3 1499.9,1041.4 1506.8,1035.6 1513.7,1035.6" fill="none" stroke="#3d9c48" stroke-width="1.8" marker-start="url(#mg)" marker-mid="url(#mg)" marker-end="url(#mg)"/>
<circle cx="674" cy="1001.5" r="2.7" fill="#fff" stroke="#8a50d8" stroke-width="1.4"/>
<path d="M673.5,1060V952.8H1515.5V1060" fill="none" stroke="#555" stroke-width="1.5"/>
<path d="M1567.8,973.6V1024M1615.8,973.6V1024M1555.2,990.6H1653.7M1555.2,1007.3H1653.7" stroke="#e4e4e4" stroke-width="1"/>
<path d="M1556,1024L1556,983 1557,984.4 1558.2,986.1 1559.4,987.8 1560.6,989.4 1561.8,991.1 1563,992.8 1564.2,994.5 1565.4,996.2 1566.6,995.5 1567.8,991.9 1569,994.8 1570.2,996.3 1571.4,996.4 1572.6,993.8 1573.8,995.1 1575,996.1 1576.2,994.5 1577.4,994.7 1578.6,990.9 1579.8,993.8 1581,993.5 1582.2,995.5 1583.4,995.9 1584.6,994.5 1585.8,992.2 1587,996.3 1588.2,994.3 1589.4,995.5 1590.6,995 1591.8,994 1593,995.7 1594.2,994.8 1595.4,994.2 1596.6,990.9 1597.8,995.2 1599,996 1600.2,996.4 1601.4,994.1 1602.6,993.7 1603.8,994.3 1605,994.6 1606.2,993.8 1607.4,995 1608.6,996.3 1609.8,994.4 1611,993.9 1612.2,995.3 1613.4,996.4 1614.6,993.5 1615.8,996.3 1617,996.1 1618.2,995.2 1619.4,996.2 1620.6,994.7 1621.8,993.9 1623,995.6 1624.2,995.4 1625.4,993.4 1626.6,995.9 1627.8,995.8 1629,994.6 1630.2,996.5 1631.4,995.3 1632.6,993.5 1633.8,994.9 1635,991.8 1636.2,993.6 1637.4,993.7 1638.6,995.2 1639.8,996.2 1641,993.8 1642.2,995.8 1643.4,992.9 1644.6,996.5 1645.8,996.2 1647,996.4 1648.2,994.5 1649.4,995.7 1650.6,995.3 1651.8,993.8 L1653,1024Z" fill="#b8dcb2" stroke="#5aaa5a" stroke-width="0.7"/>
<path d="M1556,1000L1560,1010Q1570,1008 1580,1007.5L1653,1007.5V1024H1556Z" fill="#8aa0c0" stroke="#5878a8" stroke-width="0.7"/>
<path d="M1556,1004L1560,1012Q1570,1010 1580,1009.5L1653,1009.5V1024H1556Z" fill="#8c8a8e"/>
<rect x="1555.5" y="973.6" width="98" height="50.6" fill="none" stroke="#555" stroke-width="1.3"/>
<g fill="none" stroke="#fbfbfe" stroke-width="1.4" stroke-linecap="round" stroke-linejoin="round">
<!-- tab list icon -->
<rect x="341.5" y="47.8" width="15" height="11" rx="2"/>
<path d="M343.8,44.8H354.2"/>
<path d="M347.5,52.2H350.8" stroke-width="1.6"/>
<!-- separator -->
<path d="M370.5,31V71" stroke="#34333b" stroke-width="1"/>
<!-- close tab -->
<path d="M566.9,47.3L574.4,54.9M574.4,47.3L566.9,54.9" stroke-width="1.4"/>
<!-- new tab plus -->
<path d="M606.8,46.6V57.9M601.2,52.2H612.4" stroke-width="1.5"/>
<!-- chevron -->
<path d="M1606,48.2L1612,54.2L1618,48.2" stroke-width="1.3"/>
<!-- minimize -->
<path d="M1686.5,50.8H1695.5" stroke="#c8c8cc" stroke-width="1.3"/>
<!-- restore -->
<rect x="1730.3" y="49.3" width="6.6" height="6.3" stroke="#fbfbfe" stroke-width="1.1" rx="0.8"/>
<path d="M1732.3,47.5H1739V54.3" stroke="#c8c8cc" stroke-width="1.1"/>
<!-- close -->
<path d="M1774,47.3L1783,56.3M1783,47.3L1774,56.3" stroke-width="1.1"/>
<!-- back -->
<path d="M346.5,91.5H359.5M352,86L346.5,91.5L352,97" stroke-width="1.4"/>
<!-- forward -->
<path d="M380.5,91.5H393.5M388,86L393.5,91.5L388,97" stroke="#8f8f98" stroke-width="1.4"/>
<!-- reload -->
<path d="M427.5,88.2A6.6,6.6 0 1 0 428.6,93.5" stroke-width="1.4"/>
<path d="M429.2,84.3V89.3H424.2Z" fill="#fbfbfe" stroke-width="0.8"/>
<!-- home -->
<path d="M449,91.2L455.7,84.7L462.4,91.2M450.6,89.8V98.2H460.8V89.8M453.8,98.2V93.4Q455.7,91.6 457.6,93.4V98.2" stroke-width="1.35"/>
<!-- shield -->
<path d="M601,84.2L607.6,86.4Q608.2,93.5 601,98.6Q593.8,93.5 594.4,86.4Z" stroke-width="1.35"/>
<!-- lock -->
<rect x="622.3" y="90.3" width="11.4" height="8.4" rx="1.6" stroke-width="1.35"/>
<path d="M624.8,90.3V87.6A3.2,3.2 0 0 1 631.2,87.6V90.3" stroke-width="1.35"/>
<!-- reader -->
<rect x="1436.2" y="84.2" width="11.3" height="13.6" rx="2" stroke-width="1.3"/>
<path d="M1439.2,87.9H1444.4M1439.2,90.8H1444.4M1439.2,93.6H1441.6" stroke-width="1.2"/>
<!-- translate -->
<path d="M1461,85.5H1470M1465.3,83.2V85.5M1468.6,85.5Q1466.8,91.5 1461.4,94.2M1462.8,88.6Q1465,92 1468.6,93.5" stroke-width="1.2"/>
<path d="M1468.4,98L1472,89.8L1475.8,98M1469.6,95.3H1474.6" stroke-width="1.3"/>
<!-- star -->
<path d="M1495.4,84.2L1497.6,88.9L1502.6,89.5L1498.9,93L1499.9,98.1L1495.4,95.6L1490.9,98.1L1491.9,93L1488.2,89.5L1493.2,88.9Z" stroke-width="1.3"/>
<!-- save to pocket: star + tray -->
<path d="M1638.9,83.6L1640.4,86.8L1643.7,87.2L1641.2,89.5L1641.9,92.8L1638.9,91.2L1635.9,92.8L1636.6,89.5L1634.1,87.2L1637.4,86.8Z" stroke-width="1.2"/>
<path d="M1632.8,94.5V96.6Q1632.8,97.8 1634,97.8H1643.8Q1645,97.8 1645,96.6V94.5" stroke-width="1.3"/>
<!-- download -->
<path d="M1673.4,83.6V93.2M1669.2,89L1673.4,93.2L1677.6,89" stroke-width="1.3"/>
<path d="M1667.2,94.5V96.6Q1667.2,97.8 1668.4,97.8H1678.4Q1679.6,97.8 1679.6,96.6V94.5" stroke-width="1.3"/>
<!-- account -->
<path d="M1715.9,91.5A7.6,7.6 0 1 0 1710.2,98.4" stroke-width="1.3"/>
<circle cx="1708.2" cy="89" r="1.9" fill="#fbfbfe" stroke="none"/>
<path d="M1704.6,94.2Q1708.2,97.2 1711.8,94.2" stroke-width="1.8"/>
<circle cx="1715" cy="96" r="1.9" stroke-width="1"/>
<!-- extensions puzzle -->
<path d="M1737.4,89.5H1740.2V87.4A2,2 0 0 1 1744.2,87.4V89.5H1748.8V98.3H1737.4V94.4H1739.3A1.6,1.6 0 0 0 1739.3,91.4H1737.4Z" stroke-width="1.3"/>
<!-- hamburger -->
<path d="M1771.6,86.7H1782.8M1771.6,90.9H1782.8M1771.6,95H1782.8" stroke-width="1.3" stroke="#e8e8ec"/>
</g>
<!-- favicon feather -->
<path d="M392.8,44.2Q394.2,45.4 391.6,50.2L388.6,56.4Q387.8,55.6 388.8,51.6Q390.4,46.2 392.8,44.2Z" fill="#d63a4a"/>
<path d="M392.8,44.2Q394.2,45.4 392.6,48.2L390.6,47.6Q391.6,45.2 392.8,44.2Z" fill="#f29a3c"/>

<g transform="translate(0,0)">
<path d="M629.7,147.3V155.6H640.8" fill="none" stroke="#9a9a9a" stroke-width="1"/>
<path d="M632.1,152.3V154.8M634.3,149.2V154.8M636.5,150.8V154.8M638.7,148.2V154.8" fill="none" stroke="#555" stroke-width="1.3"/>
<path d="M1709.4,148.8V154.6" stroke="#3d6f99" stroke-width="1.3"/><path d="M1707.3,149.6L1709.4,146.8L1711.5,149.6ZM1707.3,153.8L1709.4,156.6L1711.5,153.8Z" fill="#3d6f99"/>
<path d="M1724.9,155.5L1729.2,151.2" stroke="#3d6f99" stroke-width="1.8" stroke-linecap="round"/><path d="M1728.4,152A2.9,2.9 0 0 1 1731.9,148.2L1730.4,149.7L1730.8,150.9L1732,151.3L1733.5,149.8A2.9,2.9 0 0 1 1729.7,153.3Z" fill="#3d6f99"/>
<path d="M1743,154.2L1746.3,151L1749.6,154.2" fill="none" stroke="#3d6f99" stroke-width="1.6" stroke-linecap="round"/>
</g>
<g transform="translate(0,771.5)">
<path d="M629.7,147.3V155.6H640.8" fill="none" stroke="#9a9a9a" stroke-width="1"/>
<path d="M632.1,152.3V154.8M634.3,149.2V154.8M636.5,150.8V154.8M638.7,148.2V154.8" fill="none" stroke="#555" stroke-width="1.3"/>
<path d="M1709.4,148.8V154.6" stroke="#3d6f99" stroke-width="1.3"/><path d="M1707.3,149.6L1709.4,146.8L1711.5,149.6ZM1707.3,153.8L1709.4,156.6L1711.5,153.8Z" fill="#3d6f99"/>
<path d="M1724.9,155.5L1729.2,151.2" stroke="#3d6f99" stroke-width="1.8" stroke-linecap="round"/><path d="M1728.4,152A2.9,2.9 0 0 1 1731.9,148.2L1730.4,149.7L1730.8,150.9L1732,151.3L1733.5,149.8A2.9,2.9 0 0 1 1729.7,153.3Z" fill="#3d6f99"/>
<path d="M1743,154.2L1746.3,151L1749.6,154.2" fill="none" stroke="#3d6f99" stroke-width="1.6" stroke-linecap="round"/>
</g>
<path d="M1788.8,120.8L1792,117.6L1795.2,120.8" fill="none" stroke="#5a5a5a" stroke-width="1.4"/>
<path d="M1788.8,1041.2L1792,1044.4L1795.2,1041.2" fill="none" stroke="#5a5a5a" stroke-width="1.4"/>
<path d="M1567.5,202.5V252.5M1615.6,202.5V252.5M1556,219.2H1653M1556,235.8H1653" stroke="#e6e6e6" stroke-width="1"/>
<path d="M1556,252.5L1579,214.4 H1652 V252.5Z" fill="#c8aae7" stroke="#8a55cc" stroke-width="0.8"/>
<path d="M1556,252.5L1579,222.2 H1652 V252.5Z" fill="#cfdde7" stroke="#8fb0d6" stroke-width="0.8"/>
<path d="M1556,252.5L1579,231.6 H1652 V252.5Z" fill="#f8bbbf" stroke="#e08088" stroke-width="0.8"/>
<path d="M1556,252.5L1579,240.2 H1652 V252.5Z" fill="#fdf4b8" stroke="#efd57a" stroke-width="0.8"/>
<path d="M1556,252.5L1579,249 H1652 V252.5Z" fill="#9aa88c" stroke="#6a7a58" stroke-width="0.8"/>
<rect x="1555.8" y="202" width="97.4" height="50.8" fill="none" stroke="#555" stroke-width="1.3"/>
</svg>
<div class="ttl" style="left:644.5px;top:145.8px;">Active Threads Over Time</div>
<div class="ttl" style="left:644.5px;top:917px;">Response Time Percentiles Over Time (successful responses)</div>
<div class="yl" style="left:640px;top:177.9px;">2500</div>
<div class="yl" style="left:640px;top:225.4px;">2000</div>
<div class="yl" style="left:640px;top:273.4px;">1500</div>
<div class="yl" style="left:640px;top:321.4px;">1000</div>
<div class="yl" style="left:640px;top:369.4px;">500</div>
<div class="yl" style="left:640px;top:417.4px;">0</div>
<div class="xl" style="left:689.5px;top:425px;">18:50:00</div>
<div class="xl" style="left:758.9px;top:425px;">19:00:00</div>
<div class="xl" style="left:828.3px;top:425px;">19:10:00</div>
<div class="xl" style="left:897.7px;top:425px;">19:20:00</div>
<div class="xl" style="left:967.1px;top:425px;">19:30:00</div>
<div class="xl" style="left:1036.5px;top:425px;">19:40:00</div>
<div class="xl" style="left:1105.9px;top:425px;">19:50:00</div>
<div class="xl" style="left:1175.3px;top:425px;">20:00:00</div>
<div class="xl" style="left:1244.7px;top:425px;">20:10:00</div>
<div class="xl" style="left:1314.1px;top:425px;">20:20:00</div>
<div class="xl" style="left:1383.5px;top:425px;">20:30:00</div>
<div class="xl" style="left:1452.9px;top:425px;">20:40:00</div>
<div class="a" style="left:578px;top:295px;width:110px;text-align:center;font-size:9.8px;line-height:12px;color:#333;transform:rotate(-90deg)">Number of active threads</div>
<div class="a" style="left:1022px;top:443px;font-size:9.8px;color:#333;line-height:12px">Elapsed Time (granularity: 1 min)</div>
<div class="a" style="left:1533px;top:179px;font-size:10px;color:#333;line-height:12px">Zoom :</div>
<div class="yl" style="left:1522px;top:198.5px;width:30px">3000</div>
<div class="yl" style="left:1522px;top:215px;width:30px">2000</div>
<div class="yl" style="left:1522px;top:232px;width:30px">1000</div>
<div class="yl" style="left:1522px;top:248.5px;width:30px">0</div>
<div class="xl" style="left:1548px;top:257.3px;">19:00:00</div>
<div class="xl" style="left:1596px;top:257.3px;">20:00:00</div>
<div class="a" style="left:1286.5px;top:314px;width:184px;height:17.7px;border:1px solid #8c6f6f;border-radius:3px;background:#fff"></div>
<div class="a" style="left:1291.5px;top:318.1px;font-size:7.9px;color:#444;line-height:10px">VIS_2 : At 20:12:00 there were 546 active threads</div>
<div class="sq" style="left:631.9px;top:480.3px;width:10px;height:10px;border:1px solid #e4e4e4;background:#fafafa"></div><div class="sq" style="left:632.8px;top:481.3px;width:8.2px;height:8px;background:#f0bf3c"></div>
<div class="lg" style="left:645px;top:480.5px;">ACC_1</div>
<div class="sq" style="left:682.8px;top:480.3px;width:10px;height:10px;border:1px solid #e4e4e4;background:#fafafa"></div><div class="sq" style="left:683.7px;top:481.3px;width:8.2px;height:8px;background:#9a42e4"></div>
<div class="lg" style="left:695.9px;top:480.5px;">ACC_2</div>
<div class="sq" style="left:733.4px;top:480.3px;width:10px;height:10px;border:1px solid #e4e4e4;background:#fafafa"></div><div class="sq" style="left:734.3px;top:481.3px;width:8.2px;height:8px;background:#3f9f43"></div>
<div class="lg" style="left:746.5px;top:480.5px;">ACC_3</div>
<div class="sq" style="left:782.8px;top:480.3px;width:10px;height:10px;border:1px solid #e4e4e4;background:#fafafa"></div><div class="sq" style="left:783.7px;top:481.3px;width:8.2px;height:8px;background:#bcdcf6"></div>
<div class="lg" style="left:795.9px;top:480.5px;">ACC_4</div>
<div class="sq" style="left:832.8px;top:480.3px;width:10px;height:10px;border:1px solid #e4e4e4;background:#fafafa"></div><div class="sq" style="left:833.7px;top:481.3px;width:8.2px;height:8px;background:#e4f8f6"></div>
<div class="lg" style="left:845.9px;top:480.5px;">ORD_1</div>
<div class="sq" style="left:884.4px;top:480.3px;width:10px;height:10px;border:1px solid #e4e4e4;background:#fafafa"></div><div class="sq" style="left:885.3px;top:481.3px;width:8.2px;height:8px;background:#2c7a32"></div>
<div class="lg" style="left:897.5px;top:480.5px;">ORD_2</div>
<div class="sq" style="left:935px;top:480.3px;width:10px;height:10px;border:1px solid #e4e4e4;background:#fafafa"></div><div class="sq" style="left:935.9px;top:481.3px;width:8.2px;height:8px;background:#ad2a33"></div>
<div class="lg" style="left:948.1px;top:480.5px;">ORD_3</div>
<div class="sq" style="left:986px;top:480.3px;width:10px;height:10px;border:1px solid #e4e4e4;background:#fafafa"></div><div class="sq" style="left:986.9px;top:481.3px;width:8.2px;height:8px;background:#c9a132"></div>
<div class="lg" style="left:999.1px;top:480.5px;">ORD_4</div>
<div class="sq" style="left:1036.9px;top:480.3px;width:10px;height:10px;border:1px solid #e4e4e4;background:#fafafa"></div><div class="sq" style="left:1037.8px;top:481.3px;width:8.2px;height:8px;background:#e5444a"></div>
<div class="lg" style="left:1050px;top:480.5px;">setUp Thread Group</div>
<div class="sq" style="left:1136px;top:480.3px;width:10px;height:10px;border:1px solid #e4e4e4;background:#fafafa"></div><div class="sq" style="left:1136.9px;top:481.3px;width:8.2px;height:8px;background:#52c656"></div>
<div class="lg" style="left:1149.1px;top:480.5px;">tearDown Thread Group</div>
<div class="sq" style="left:1248.8px;top:480.3px;width:10px;height:10px;border:1px solid #e4e4e4;background:#fafafa"></div><div class="sq" style="left:1249.7px;top:481.3px;width:8.2px;height:8px;background:#f8e85c"></div>
<div class="lg" style="left:1261.9px;top:480.5px;">VIS_1</div>
<div class="sq" style="left:1295.4px;top:480.3px;width:10px;height:10px;border:1px solid #e4e4e4;background:#fafafa"></div><div class="sq" style="left:1296.3px;top:481.3px;width:8.2px;height:8px;background:#e84c4c"></div>
<div class="lg" style="left:1308.5px;top:480.5px;">VIS_2</div>
<div class="sq" style="left:1341.4px;top:480.3px;width:10px;height:10px;border:1px solid #e4e4e4;background:#fafafa"></div><div class="sq" style="left:1342.3px;top:481.3px;width:8.2px;height:8px;background:#8aa9c6"></div>
<div class="lg" style="left:1354.5px;top:480.5px;">VIS_3</div>
<div class="sq" style="left:1387.4px;top:480.3px;width:10px;height:10px;border:1px solid #e4e4e4;background:#fafafa"></div><div class="sq" style="left:1388.3px;top:481.3px;width:8.2px;height:8px;background:#6a2ad0"></div>
<div class="lg" style="left:1400.5px;top:480.5px;">VIS_4</div>
<div class="yl" style="left:640px;top:949.4px;">2500</div>
<div class="yl" style="left:640px;top:997.4px;">2000</div>
<div class="yl" style="left:640px;top:1045.4px;">1500</div>
<div class="a" style="left:578px;top:1068px;width:110px;text-align:center;font-size:9.8px;line-height:12px;color:#333;transform:rotate(-90deg)">Response Time in ms</div>
<div class="a" style="left:1533px;top:949.5px;font-size:10px;color:#333;line-height:12px">Zoom :</div>
<div class="yl" style="left:1522px;top:969.5px;">3000</div>
<div class="yl" style="left:1522px;top:986px;">2000</div>
<div class="yl" style="left:1522px;top:1002.5px;">1000</div>
<div class="yl" style="left:1522px;top:1019px;">0</div>
<div class="xl" style="left:1548px;top:1027.5px;">19:00:00</div>
<div class="xl" style="left:1596px;top:1027.5px;">20:00:00</div>
<div class="a" style="left:1091.5px;top:530px;width:200px;text-align:center;font-size:16.7px;font-weight:700;color:#1e3d35;line-height:20px">Errors</div>
<div class="a" style="left:644.4px;top:580px;width:317.6px;height:24.5px;background:#9cbee7;border-right:1px solid #b8d4ee;font-size:10.4px;font-weight:700;color:#333;line-height:27.5px;text-align:center;padding-right:12px">Type of error</div>
<div class="a" style="left:962px;top:580px;width:258.3px;height:24.5px;background:#88b1dc;border-right:1px solid #b8d4ee;font-size:10.4px;font-weight:700;color:#333;line-height:27.5px;text-align:center;padding-right:12px">Number of errors</div>
<div class="a" style="left:1220.3px;top:580px;width:256.9px;height:24.5px;background:#9cbee7;border-right:1px solid #b8d4ee;font-size:10.4px;font-weight:700;color:#333;line-height:27.5px;text-align:center;padding-right:12px">% in errors</div>
<div class="a" style="left:1477.2px;top:580px;width:260.8px;height:24.5px;background:#9cbee7;border-right:1px solid #b8d4ee;font-size:10.4px;font-weight:700;color:#333;line-height:27.5px;text-align:center;padding-right:12px">% in all samples</div>
<div class="a" style="left:644.4px;top:604.5px;width:1093.6px;height:27.5px;background:#eaf1fa;border-bottom:1px solid #dfe4ea"></div>
<div class="a" style="left:649.4px;top:611.5px;font-size:12.3px;line-height:17.3px;color:#333">409</div>
<div class="a" style="left:967px;top:611.5px;font-size:12.3px;line-height:17.3px;color:#333">191</div>
<div class="a" style="left:1225.3px;top:611.5px;font-size:12.3px;line-height:17.3px;color:#333">34.35%</div>
<div class="a" style="left:1482.2px;top:611.5px;font-size:12.3px;line-height:17.3px;color:#333">0.03%</div>
<div class="a" style="left:644.4px;top:632px;width:1093.6px;height:44px;background:#fff;border-bottom:1px solid #dfe4ea"></div>
<div class="a" style="left:649.4px;top:639px;font-size:12.3px;line-height:17.3px;color:#333">Non HTTP response code:<br>java.net.SocketTimeoutException</div>
<div class="a" style="left:967px;top:639px;font-size:12.3px;line-height:17.3px;color:#333">171</div>
<div class="a" style="left:1225.3px;top:639px;font-size:12.3px;line-height:17.3px;color:#333">30.76%</div>
<div class="a" style="left:1482.2px;top:639px;font-size:12.3px;line-height:17.3px;color:#333">0.02%</div>
<div class="a" style="left:644.4px;top:676px;width:1093.6px;height:27.5px;background:#eaf1fa;border-bottom:1px solid #dfe4ea"></div>
<div class="a" style="left:649.4px;top:683px;font-size:12.3px;line-height:17.3px;color:#333">503</div>
<div class="a" style="left:967px;top:683px;font-size:12.3px;line-height:17.3px;color:#333">72</div>
<div class="a" style="left:1225.3px;top:683px;font-size:12.3px;line-height:17.3px;color:#333">12.95%</div>
<div class="a" style="left:1482.2px;top:683px;font-size:12.3px;line-height:17.3px;color:#333">0.01%</div>
<div class="a" style="left:644.4px;top:703.5px;width:1093.6px;height:44px;background:#fff;border-bottom:1px solid #dfe4ea"></div>
<div class="a" style="left:649.4px;top:710.5px;font-size:12.3px;line-height:17.3px;color:#333">Test failed: text expected to contain /div<br>class=&quot;prodDescr&quot;/</div>
<div class="a" style="left:967px;top:710.5px;font-size:12.3px;line-height:17.3px;color:#333">54</div>
<div class="a" style="left:1225.3px;top:710.5px;font-size:12.3px;line-height:17.3px;color:#333">9.71%</div>
<div class="a" style="left:1482.2px;top:710.5px;font-size:12.3px;line-height:17.3px;color:#333">0.01%</div>
<div class="a" style="left:644.4px;top:747.5px;width:1093.6px;height:27.5px;background:#eaf1fa;border-bottom:1px solid #dfe4ea"></div>
<div class="a" style="left:649.4px;top:754.5px;font-size:12.3px;line-height:17.3px;color:#333">Response was null</div>
<div class="a" style="left:967px;top:754.5px;font-size:12.3px;line-height:17.3px;color:#333">52</div>
<div class="a" style="left:1225.3px;top:754.5px;font-size:12.3px;line-height:17.3px;color:#333">9.35%</div>
<div class="a" style="left:1482.2px;top:754.5px;font-size:12.3px;line-height:17.3px;color:#333">0.01%</div>
<div class="a" style="left:644.4px;top:775px;width:1093.6px;height:44px;background:#fff;border-bottom:1px solid #dfe4ea"></div>
<div class="a" style="left:649.4px;top:782px;font-size:12.3px;line-height:17.3px;color:#333">Non HTTP response code:<br>org.apache.http.NoHttpResponseException</div>
<div class="a" style="left:967px;top:782px;font-size:12.3px;line-height:17.3px;color:#333">20</div>
<div class="a" style="left:1225.3px;top:782px;font-size:12.3px;line-height:17.3px;color:#333">3.60%</div>
<div class="a" style="left:1482.2px;top:782px;font-size:12.3px;line-height:17.3px;color:#333">0.00%</div>
<div class="a" style="left:644.4px;top:819px;width:1093.6px;height:44px;background:#eaf1fa;border-bottom:1px solid #dfe4ea"></div>
<div class="a" style="left:649.4px;top:826px;font-size:12.3px;line-height:17.3px;color:#333">Test failed: text expected to contain<br>/$(&quot;#shoppingCartDetailsForm&quot;).submit();/</div>
<div class="a" style="left:967px;top:826px;font-size:12.3px;line-height:17.3px;color:#333">3</div>
<div class="a" style="left:1225.3px;top:826px;font-size:12.3px;line-height:17.3px;color:#333">0.54%</div>
<div class="a" style="left:1482.2px;top:826px;font-size:12.3px;line-height:17.3px;color:#333">0.00%</div>
<div class="a" style="left:961.5px;top:604.5px;width:1px;height:258.5px;background:#dfe4ea"></div>
<div class="a" style="left:1219.8px;top:604.5px;width:1px;height:258.5px;background:#dfe4ea"></div>
<div class="a" style="left:1476.7px;top:604.5px;width:1px;height:258.5px;background:#dfe4ea"></div>
<div class="a" style="left:644px;top:604.5px;width:1px;height:258.5px;background:#dfe4ea"></div>
<div class="a" style="left:1737.5px;top:604.5px;width:1px;height:258.5px;background:#dfe4ea"></div>
<svg width="1920" height="1050" viewBox="0 0 1920 1050"><path d="M949.6,592L952.6,588.4L955.6,592ZM949.6,593.6L952.6,597.2L955.6,593.6Z" fill="#1e2e36"/>
<path d="M1464.4,592L1467.4,588.4L1470.4,592ZM1464.4,593.6L1467.4,597.2L1470.4,593.6Z" fill="#1e2e36"/>
<path d="M1725.2,592L1728.2,588.4L1731.2,592ZM1725.2,593.6L1728.2,597.2L1731.2,593.6Z" fill="#1e2e36"/>
<path d="M1207.6,590.4H1214L1210.8,594Z" fill="#1e2e36"/></svg>
</div>
<div class="a" style="left:402.5px;top:44px;font-size:11.4px;line-height:16px;color:#fbfbfe">Apache JMeter Dashboard</div>
<div class="a" style="left:644px;top:85.5px;font-size:12.6px;line-height:16px;color:#a3a3ab">file:///D:/CryptoTrade/Home/TestResults/HTMLReports/index.html</div>
<div id="phone"><div style="position:absolute;left:-118px;top:-157px;width:1920px;height:1080px">
<div class="a" style="left:143.6px;top:167.2px;line-height:20px;font-size:16.3px;color:#111;letter-spacing:-0.45px;-webkit-text-stroke:0.25px #111">10:00 AM</div>
<div class="a" style="left:118px;top:264px;width:376px;height:1px;background:#e9e9ec"></div>
<div class="a" style="left:143.4px;top:217.3px;width:31px;height:31px;border:1px solid #e4e5e8;border-radius:7px;background:#fff"></div>
<div class="a" style="left:358.5px;top:217.3px;width:31px;height:31px;border:1px solid #e4e5e8;border-radius:7px;background:#fff"></div>
<div class="a" style="left:398.6px;top:217.3px;width:31px;height:31px;border:1px solid #e4e5e8;border-radius:7px;background:#fff"></div>
<div class="a" style="left:438.9px;top:217.3px;width:31px;height:31px;border:1px solid #e4e5e8;border-radius:7px;background:#fff"></div>
<div class="a" style="left:318.4px;top:217.3px;width:31px;height:31px;border-radius:7px;background:#f1f3f6"></div>
<div class="a" style="left:143.5px;top:289.7px;width:326px;height:526px;border:1px solid #e5e6e9;border-radius:13px;background:#fff"></div>
<div class="a" style="left:144px;top:344px;width:325px;height:1px;background:#e8e9ec"></div>
<div class="a" style="left:159.3px;top:305px;line-height:20px;font-size:18.3px;color:#111;letter-spacing:-1.1px;-webkit-text-stroke:0.2px #111">1h</div>
<div class="a" style="left:284.4px;top:306px;line-height:20px;font-size:16px;color:#444;letter-spacing:1.03px">Indicators</div>
<div class="a" style="left:390.6px;top:306px;line-height:20px;font-size:16px;color:#444;letter-spacing:0.7px">Binance</div>
<div class="a" style="left:190.1px;top:305px;width:1px;height:24px;background:#e6e7ea"></div>
<div class="a" style="left:238.9px;top:305px;width:1px;height:24px;background:#e6e7ea"></div>
<div class="a" style="left:377px;top:305px;width:1px;height:24px;background:#e6e7ea"></div>
<div class="a" style="left:466.9px;top:305px;width:1px;height:24px;background:#e6e7ea"></div>
<div class="a" style="left:159.6px;top:358.6px;line-height:20px;font-size:14.3px;color:#1e1e1e;letter-spacing:0.15px;-webkit-text-stroke:0.2px #1e1e1e">bot, BNB / SOL <b style="-webkit-text-stroke:0.6px #1e1e1e">&middot;</b> 24h <b style="-webkit-text-stroke:0.6px #1e1e1e">&middot;</b> Binance</div>
<div class="a" style="left:378.5px;top:358.6px;line-height:20px;font-size:14px;color:#222">O</div>
<div class="a" style="left:391.8px;top:358.6px;line-height:20px;font-size:13.9px;color:#6cc070;letter-spacing:-0.6px">108,412.77</div>
<div class="a" style="left:159.3px;top:768.1px;width:215px;height:31.7px;border-radius:7px;background:#f0f2f5"></div>
<div class="a" style="left:164.5px;top:773.8px;width:29.4px;text-align:center;line-height:20px;font-size:15.4px;color:#555">3m</div>
<div class="a" style="left:203.4px;top:773.8px;width:26.9px;text-align:center;line-height:20px;font-size:15.4px;color:#555">1m</div>
<div class="a" style="left:240.6px;top:773.8px;width:25.3px;text-align:center;line-height:20px;font-size:15.4px;color:#3550c8;text-decoration:underline;text-underline-offset:2px">7d</div>
<div class="a" style="left:274.5px;top:773.8px;width:25.9px;text-align:center;line-height:20px;font-size:15.4px;color:#555">3d</div>
<div class="a" style="left:309.2px;top:773.8px;width:26.1px;text-align:center;line-height:20px;font-size:15.4px;color:#555">6h</div>
<div class="a" style="left:344.7px;top:773.8px;width:23.2px;text-align:center;line-height:20px;font-size:15.4px;color:#555">1h</div>
<div class="a" style="left:391.2px;top:772px;line-height:20px;font-size:16.4px;color:#111;letter-spacing:-0.55px">12:12:56 (U</div>
<div class="a" style="left:143.5px;top:828px;width:326px;height:200px;border:1px solid #e5e6e9;border-radius:13px;background:#fff"></div>
<div class="a" style="left:159.6px;top:843.7px;width:39.6px;height:40.5px;border-radius:9px;background:#f1f2f6"></div>
<div class="a" style="left:207.3px;top:844px;line-height:20px;font-size:17.7px;letter-spacing:-0.75px"><span style="color:#111">BTC</span> <span style="color:#555">/ USDT</span></div>
<div class="a" style="left:207.3px;top:868.8px;line-height:20px;font-size:12px;color:#444;letter-spacing:-0.1px">Spot GRID</div>
<div class="a" style="left:311.8px;top:844px;width:76.2px;height:31.5px;border-radius:7px;background:#eef0f3"></div>
<div class="a" style="left:311.8px;top:849.2px;line-height:20px;font-size:12.6px;color:#222;width:76px;text-align:center;letter-spacing:-0.9px">USDT</div>
<div class="a" style="left:388px;top:849.2px;line-height:20px;font-size:12.6px;color:#222;width:76px;text-align:center;letter-spacing:-0.9px">USD</div>
<div class="a" style="left:207.5px;top:896.5px;width:95px;height:23px;border:1px solid #dcdde0;border-radius:6px;background:#fff"></div>
<div class="a" style="left:218.6px;top:897.2px;line-height:20px;font-size:12.2px;color:#222;letter-spacing:0.5px;-webkit-text-stroke:0.05px #222">Long / Short</div>
<div class="a" style="left:118px;top:926px;width:376px;height:86px;background:#f1f2f6"></div>
<div class="a" style="left:318.5px;top:939.2px;width:33.3px;height:33.9px;border-radius:8px;background:#fff;box-shadow:0 0 2px rgba(0,0,0,.08)"></div>
<div class="a" style="left:233px;top:993px;width:148px;height:4.8px;border-radius:3px;background:#0a0a0c"></div>
<svg width="1920" height="1080" viewBox="0 0 1920 1080">
<rect x="398.9" y="180" width="2.8" height="3.5" rx="1" fill="#0a0a0a"/>
<rect x="404" y="178.1" width="2.8" height="5.4" rx="1" fill="#0a0a0a"/>
<rect x="409.2" y="176" width="2.8" height="7.5" rx="1" fill="#0a0a0a"/>
<rect x="414.4" y="173.9" width="2.8" height="9.6" rx="1" fill="#0a0a0a"/>
<path d="M423.6,176.8A10,10 0 0 1 437.2,176.8" fill="none" stroke="#0a0a0a" stroke-width="1.9" stroke-linecap="round"/>
<path d="M426.2,179.6A6,6 0 0 1 434.6,179.6" fill="none" stroke="#0a0a0a" stroke-width="1.9" stroke-linecap="round"/>
<path d="M428.4,181.9L430.4,180.5L432.4,181.9L430.4,183.9Z" fill="#0a0a0a"/>
<rect x="445" y="173.2" width="22.2" height="11.4" rx="3" fill="none" stroke="#d6d6d8" stroke-width="1.3"/>
<rect x="446.6" y="174.8" width="19" height="8.2" rx="1.6" fill="#0a0a0c"/>
<path d="M468.6,177V181" stroke="#d6d6d8" stroke-width="1.3" stroke-linecap="round"/>
<g fill="none" stroke="#3e3e44" stroke-width="1.5" stroke-linecap="round">
<path d="M153.8,227.6H164.8M153.8,232.8H164.8M153.8,238H164.8" stroke="#333" stroke-width="1.6"/>
<path d="M334,228.4V237.8M329.3,233.1H338.7" stroke-width="1.5"/>
<circle cx="373.6" cy="232.5" r="6.2"/><path d="M378.2,237.2L380.6,239.7"/>
<path d="M408.4,236.3Q409.6,235 409.6,232.4V231.2A4.8,4.8 0 0 1 419.2,231.2V232.4Q419.2,235 420.4,236.3Q420.6,237.2 419.6,237.3H409.2Q408.2,237.2 408.4,236.3Z" stroke-width="1.4"/><path d="M412.9,239.6H415.9" stroke-width="1.5"/>
<rect x="447.5" y="228.8" width="13.4" height="10.4" rx="2.8" stroke-width="1.5"/><path d="M450.5,228.8L456.2,225.6Q457.6,225.2 458,226.8L458.4,228.8" stroke-width="1.3"/><path d="M460.9,232.3H457.5A1.7,1.7 0 0 0 457.5,235.7H460.9" stroke-width="1.3"/><path d="M450.9,232.6V235.2" stroke-width="1.5"/>
</g>
<g fill="none" stroke="#151515" stroke-width="1.4">
<rect x="208.6" y="311.2" width="4.8" height="10.8" rx="1.3"/><path d="M211,307.4V311.2M211,322V325.8"/>
<rect x="217.2" y="313.2" width="4.8" height="5.8" rx="2.4"/><path d="M219.6,309.6V313.2M219.6,319V323.6"/>
</g>
<text x="252" y="322.8" font-family="Liberation Serif" font-style="italic" font-size="21" fill="#222">f</text>
<text x="262.6" y="323.6" font-family="Liberation Sans" font-weight="700" font-size="10" fill="#222">(x)</text>
<path d="M191.8,396V752M217.6,396V752M243.5,396V752M270,396V752M296.2,396V752M322.6,396V752M349,396V752M375.4,396V752M401.6,396V752M427.6,396V752M454.2,396V752M191.8,396H469M191.8,412.2H469M191.8,438.5H469M191.8,465H469M191.8,491.5H469M191.8,517.6H469M191.8,543.6H469M191.8,570.2H469M191.8,596.6H469M191.8,622.4H469M191.8,649H469M191.8,675.6H469M191.8,701.8H469M144,752H469" stroke="#eceef1" stroke-width="1" fill="none"/>
<path d="M193.94,667.75H198.14V719.8H193.94ZM199.91,693.31H204.11V719.8H199.91ZM206.72,698.42H210.92V719.8H206.72ZM213.12,707.58H217.32V719.8H213.12ZM219.93,713.34H224.13V719.8H219.93ZM226.96,715.04H231.16V719.8H226.96ZM233.78,716.74H237.98V719.8H233.78ZM240.38,710.35H244.58V719.8H240.38ZM247.63,693.31H251.83V719.8H247.63ZM254.02,703.96H258.22V719.8H254.02ZM260.41,709.08H264.61V719.8H260.41ZM267.44,670.3H271.64V719.8H267.44ZM274.9,712.91H279.1V719.8H274.9ZM281.71,682.02H285.91V719.8H281.71ZM288.74,692.67H292.94V719.8H288.74ZM295.56,687.77H299.76V719.8H295.56ZM302.59,715.04H306.79V719.8H302.59ZM309.41,707.58H313.61V719.8H309.41ZM315.8,700.55H320V719.8H315.8ZM322.83,692.67H327.03V719.8H322.83ZM329.65,698.42H333.85V719.8H329.65ZM336.25,708.22H340.45V719.8H336.25ZM343.07,689.48H347.27V719.8H343.07ZM349.89,679.89H354.09V719.8H349.89ZM356.49,698H360.69V719.8H356.49ZM363.31,711.21H367.51V719.8H363.31ZM370.34,685.22H374.54V719.8H370.34ZM376.73,692.03H380.93V719.8H376.73ZM383.55,701.83H387.75V719.8H383.55ZM390.58,716.11H394.78V719.8H390.58ZM397.39,713.34H401.59V719.8H397.39ZM404.21,705.45H408.41V719.8H404.21ZM411.24,696.29H415.44V719.8H411.24ZM417.63,688.41H421.83V719.8H417.63ZM424.02,695.44H428.22V719.8H424.02ZM430.41,682.02H434.61V719.8H430.41ZM437.23,699.06H441.43V719.8H437.23ZM444.26,708.22H448.46V719.8H444.26ZM451.08,713.34H455.28V719.8H451.08ZM457.68,703.32H461.88V719.8H457.68ZM464.5,695.87H468.7V719.8H464.5Z" fill="#e0e2e4"/>
<path d="M196.04,412.37V444.32M203.07,416.63V445.82M230.77,445.82V493.96M237.8,472.66V517.4M251.43,452.85V496.95M278.7,472.66V547.22M285.52,483.31V524.21M292.33,436.87V510.37M305.76,498.22V560M319.6,491.19V562.13M326.63,532.31V572.15M340.48,506.74V547.65M360.72,485.87V580.03M367.54,508.24V573.21M381.38,500.35V549.35M395.23,521.02V571.51M409.08,473.51V559.37M429.32,534.87V597.07M449.98,512.5V591.96M457.01,548.71V587.7" stroke="#4f72e2" stroke-width="1" fill="none"/>
<path d="M210.53,421.53V469.25M216.92,440.06V487.57M223.74,456.04V486.93M244.61,454.98V510.37M258.25,443.26V526.34M264.85,462.01V510.37M271.67,491.19V531.03M298.94,485.44V534.87M312.79,500.35V549.78M333.45,515.69V555.74M347.3,508.24V562.99M354.12,525.28V564.69M374.57,512.5V558.3M388.2,503.98V566.4M402.05,479.9V559.37M415.9,492.26V548.07M422.29,522.51V580.03M436.14,547.22V600.48M443.17,550.84V604.1M463.83,539.55V578.54" stroke="#e85c5c" stroke-width="1" fill="none"/>
<path d="M202.4,510.8H466.6" stroke="#5f86d8" stroke-width="1.1" stroke-dasharray="3,2.2"/>
<path d="M194.04,418.76H198.04V434.31H194.04ZM201.07,427.28H205.07V445.82H201.07ZM228.77,456.47H232.77V486.93H228.77ZM235.8,476.92H239.8V486.29H235.8ZM249.43,477.77H253.43V490.55H249.43ZM276.7,490.13H280.7V521.02H276.7ZM283.52,497.58H287.52V508.24H283.52ZM290.33,464.99H294.33V501.84H290.33ZM303.76,509.94H307.76V519.53H303.76ZM317.6,509.3H321.6V542.32H317.6ZM324.63,542.32H328.63V552.33H324.63ZM338.48,525.28H342.48V541.68H338.48ZM358.72,497.58H362.72V564.27H358.72ZM365.54,518.25H369.54V536.57H365.54ZM379.38,527.41H383.38V535.29H379.38ZM393.23,529.54H397.23V556.6H393.23ZM407.08,482.03H411.08V540.83H407.08ZM427.32,552.97H431.32V567.25H427.32ZM447.98,525.92H451.98V584.29H447.98ZM455.01,566.4H459.01V574.28H455.01Z" fill="#1f48e8"/>
<path d="M208.53,432.18H212.53V465.63H208.53ZM214.92,447.52H218.92V467.76H214.92ZM221.74,469.89H225.74V477.77H221.74ZM242.61,479.9H246.61V495.45H242.61ZM256.25,448.59H260.25V493.96H256.25ZM262.85,493.32H266.85V501.21H262.85ZM269.67,498.65H273.67V518.89H269.67ZM296.94,492.9H300.94V513.14H296.94ZM310.79,511.43H314.79V526.77H310.79ZM331.45,533.8H335.45V543.81H331.45ZM345.3,517.4H349.3V542.32H345.3ZM352.12,543.39H356.12V548.07H352.12ZM372.57,524.64H376.57V546.58H372.57ZM386.2,508.24H390.2V545.52H386.2ZM400.05,516.76H404.05V550.2H400.05ZM413.9,515.27H417.9V536.57H413.9ZM420.29,544.45H424.29V556.6H420.29ZM434.14,560.86H438.14V589.19H434.14ZM441.17,564.27H445.17V592.81H441.17ZM461.83,556.6H465.83V569.38H461.83Z" fill="#ea3434"/>
<path d="M468.7,495.5V567" stroke="#ee7a7a" stroke-width="1"/>
<g fill="none" stroke="#4a4a50" stroke-width="1.2" stroke-linecap="round" stroke-linejoin="round">
<path d="M162.4,407V411M162.4,416V420M156,413.4H160M165,413.4H169"/>
<path d="M156,446.6L168.4,434.2M163.6,434.4H168.4V439.2M156,441.6V446.6H161"/>
<path d="M156.7,462.4H168.7M156.7,467.3H168.7M156.7,472.1H168.7"/><circle cx="164.3" cy="462.4" r="1.5" fill="#fff"/><circle cx="161.3" cy="467.3" r="1.5" fill="#fff"/><circle cx="163" cy="472.1" r="1.5" fill="#fff"/>
<path d="M157.6,500.6L160.8,489.4L166.4,491.6L169,500.6Z"/><circle cx="157.6" cy="500.6" r="1.3" fill="#fff"/><circle cx="160.8" cy="489.4" r="1.3" fill="#fff"/><circle cx="166.4" cy="491.6" r="1.3" fill="#fff"/><circle cx="169" cy="500.6" r="1.3" fill="#fff"/>
<path d="M157.4,528.6Q163,526.6 168.8,528.6M158.6,525.2V520.6L163.4,517.6L167.4,521L163.6,525.2ZM163.4,517.6L164.6,514.6M167,520.2L169,519.6"/><circle cx="162" cy="521.6" r="1.3"/>
<path d="M156.6,544.2V542.8H168.8V544.2M162.7,542.8V555.6M160.2,555.6H165.2" stroke-width="1.3"/>
<circle cx="162.9" cy="576.5" r="6.3"/><path d="M159.8,578.4Q162.9,581.6 166,578.4M159.8,575.2Q160.6,573.8 161.4,575.2M164.4,575.2Q165.2,573.8 166,575.2"/>
<path d="M157.2,617L165.4,608.8Q166.4,607.8 167.4,608.8L168.6,610Q169.6,611 168.6,612L160.4,620.2Q159.4,621.2 158.4,620.2L157.2,619Q156.2,618 157.2,617ZM160.4,614.8L161.8,616.2M162.8,612.4L164.2,613.8M165.2,610L166.6,611.4"/>
<circle cx="162" cy="641" r="5.6"/><path d="M166.2,645.2L169,648M162,638.4V643.6M159.4,641H164.6"/>
<path d="M157.2,673.6V680.2A5.7,5.7 0 0 0 168.6,680.2V673.6H165.6V680.2A2.7,2.7 0 0 1 160.2,680.2V673.6Z"/><path d="M157.2,676.6H160.2M165.6,676.6H168.6"/>
<path d="M163.6,701.4H159.4Q157,701.4 157,703.8V710.6Q157,713 159.4,713H166.2Q168.6,713 168.6,710.6V706.6M161.8,708.6L162.4,705.8L167.4,700.8Q168.4,699.8 169.4,700.8Q170.4,701.8 169.4,702.8L164.4,707.8Z"/>
<rect x="157" y="733.2" width="11.8" height="8.6" rx="2.2"/><path d="M159.6,733.2V731A3.3,3.3 0 0 1 166,730.2M162.9,736.6V738.4"/>
</g>
<path d="M154,595.6H172M154,660.7H172" stroke="#e6e7ea" stroke-width="1"/>
<path d="M181.9,861.2L184.7,864L181.9,866.8L179.1,864ZM172.3,861.4L174.9,864L172.3,866.6L169.7,864ZM191.5,861.4L194.1,864L191.5,866.6L188.9,864ZM181.9,851.8L189.5,859.4L187.1,861.8L181.9,856.6L176.7,861.8L174.3,859.4ZM181.9,876.2L189.5,868.6L187.1,866.2L181.9,871.4L176.7,866.2L174.3,868.6Z" fill="#ebb82a"/>
<path d="M161.9,949.4A7.6,7.2 0 0 1 169.5,956.6Q169.5,963 162,963Q154.3,963 154.3,956.6A7.6,7.2 0 0 1 161.9,949.4Z" fill="#4a4a55"/>
<circle cx="161" cy="957.4" r="2" fill="none" stroke="#fff" stroke-width="1.3"/><path d="M162.4,956L165,953.4" stroke="#fff" stroke-width="1.3" stroke-linecap="round"/>
<path d="M212.2,954.6L219.5,948L226.8,954.6V961.2Q226.8,963.4 224.6,963.4H214.4Q212.2,963.4 212.2,961.2Z" fill="#4a4a55"/>
<path d="M216.4,955.6V960.2M219.5,957.4V960.2M222.6,953.8V960.2" stroke="#fff" stroke-width="1.5"/>
<path d="M276.6,948.2A7.5,7.5 0 1 0 284.9,956.4H276.6Z" fill="#4a4a55"/><path d="M278.4,946.6A7.4,7.4 0 0 1 285,953.4H278.4Z" fill="#4a4a55"/>
<g fill="#2a4fe6"><circle cx="335.4" cy="948.6" r="1.2"/><path d="M335,949.6H335.8V951.4H335Z"/><rect x="329.2" y="951.2" width="12.4" height="9.8" rx="3.6"/><rect x="327.5" y="953.6" width="1.2" height="4.8" rx="0.6"/><rect x="342.1" y="953.6" width="1.2" height="4.8" rx="0.6"/><path d="M330.6,963.6Q335.4,960.6 340.2,963.6" fill="none" stroke="#2a4fe6" stroke-width="1.2"/></g>
<rect x="332.2" y="954.4" width="1.6" height="2.2" rx="0.8" fill="#fff"/><rect x="337" y="954.4" width="1.6" height="2.2" rx="0.8" fill="#fff"/><path d="M333.4,958.2H337.4" stroke="#fff" stroke-width="0.9"/>
<rect x="385.9" y="948" width="15.2" height="11" rx="3" fill="#4a4a55"/><path d="M393.5,959V962.4M389.4,963.2H397.6" stroke="#4a4a55" stroke-width="1.4"/><path d="M390,951.4V955.6M393.5,952.6V955.6M397,950.8V955.6" stroke="#fff" stroke-width="1.2"/>
<circle cx="451.4" cy="955.6" r="8.4" fill="#4a4a55"/><path d="M455,952Q451,952.4 449.4,955.2L447.8,959.2Q451.8,958.8 453.4,956Z" fill="#fff"/>
</svg>
<div class="a" style="left:192px;top:726px;width:24px;text-align:center;line-height:20px;font-size:12.6px;color:#333;letter-spacing:-0.4px">17</div>
<div class="a" style="left:218.2px;top:726px;width:24px;text-align:center;line-height:20px;font-size:12.6px;color:#333;letter-spacing:-0.4px">18</div>
<div class="a" style="left:244.4px;top:726px;width:24px;text-align:center;line-height:20px;font-size:12.6px;color:#333;letter-spacing:-0.4px">19</div>
<div class="a" style="left:270.8px;top:726px;width:24px;text-align:center;line-height:20px;font-size:12.6px;color:#333;letter-spacing:-0.4px">20</div>
<div class="a" style="left:297.2px;top:726px;width:24px;text-align:center;line-height:20px;font-size:12.6px;color:#333;letter-spacing:-0.4px">21</div>
<div class="a" style="left:323.5px;top:726px;width:24px;text-align:center;line-height:20px;font-size:12.6px;color:#333;letter-spacing:-0.4px">22</div>
<div class="a" style="left:349.8px;top:726px;width:24px;text-align:center;line-height:20px;font-size:12.6px;color:#333;letter-spacing:-0.4px">23</div>
<div class="a" style="left:376px;top:726px;width:24px;text-align:center;line-height:20px;font-size:12.6px;color:#333;letter-spacing:-0.4px">24</div>
<div class="a" style="left:402.4px;top:726px;width:24px;text-align:center;line-height:20px;font-size:12.6px;color:#333;letter-spacing:-0.4px">25</div>
<div class="a" style="left:428.7px;top:726px;width:24px;text-align:center;line-height:20px;font-size:12.6px;color:#333;letter-spacing:-0.4px">26</div>
<div class="a" style="left:455px;top:726px;width:24px;text-align:center;line-height:20px;font-size:12.6px;color:#333;letter-spacing:-0.4px">27</div>
<div class="a" style="left:469px;top:720px;width:20px;height:30px;background:#fff;border-left:1px solid #e5e6e9"></div>
</div></div>
</body></html>
